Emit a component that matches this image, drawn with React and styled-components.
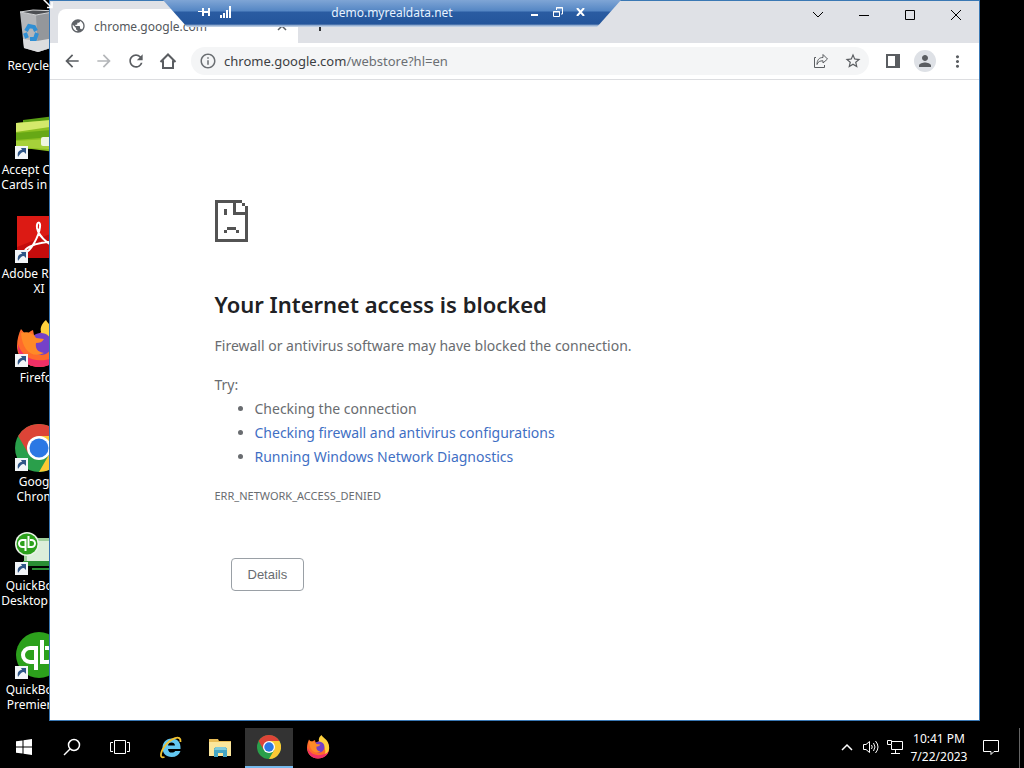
import React from "react";
import styled, { createGlobalStyle } from "styled-components";
import {
  MdArrowBack,
  MdArrowForward,
  MdRefresh,
  MdInfoOutline,
  MdStarBorder,
  MdPerson,
  MdMoreVert,
  MdPublic
} from "react-icons/md";

const GlobalStyle = createGlobalStyle`
  * {
    box-sizing: border-box;
  }
  body {
    margin: 0;
    background: #000;
    font-family: "Noto Sans", "Open Sans", sans-serif;
  }
  button {
    padding: 0;
    border: 0;
    background: none;
    color: inherit;
    font: inherit;
  }
`;

const Screen = styled.div`
  display: flex;
  flex-direction: column;
  height: 100vh;
  overflow: hidden;
`;

const Desktop = styled.main`
  position: relative;
  flex: 1;
  min-height: 0;
`;

/* desktop shortcuts */

const Shortcuts = styled.div`
  display: flex;
  flex-direction: column;
  width: 78px;
`;

const Shortcut = styled.button`
  display: flex;
  flex-direction: column;
  align-items: center;
  gap: 2px;
  height: 104px;
  padding-top: 8px;
  color: #fff;
  font-size: 12px;
  line-height: 15px;
  white-space: nowrap;
`;

const Picture = styled.svg`
  display: block;
  flex: none;
  width: ${props => props.$size || 48}px;
  height: ${props => props.$size || 48}px;
`;

const Cursor = styled.svg`
  position: absolute;
  top: 0;
  left: 43px;
`;

/* browser window */

const Window = styled.section`
  position: absolute;
  top: 0;
  right: 44px;
  bottom: 7px;
  left: 49px;
  display: flex;
  flex-direction: column;
  border: 1px solid #3a78b4;
  background: #fff;
`;

const TabStrip = styled.div`
  display: flex;
  height: 42px;
  padding: 8px 0 0 8px;
  background: #dfe1e6;
`;

const Tab = styled.div`
  display: flex;
  align-items: center;
  gap: 8px;
  width: 240px;
  padding: 0 9px 0 12px;
  border-radius: 8px 8px 0 0;
  background: #fff;
  color: #54585c;
  font-size: 12px;
`;

const TabTitle = styled.span`
  flex: 1;
`;

const IconButton = styled.button`
  display: flex;
  align-items: center;
  justify-content: center;
  width: ${props => props.$width || 32}px;
  height: ${props => props.$height || 32}px;
  color: ${props => props.$color || "#5a5d61"};
`;

const Captions = styled.div`
  display: flex;
  margin: -8px 0 0 auto;
`;

const Toolbar = styled.div`
  display: flex;
  align-items: center;
  height: 37px;
  padding: 0 6px;
  border-bottom: 1px solid #dcdde0;
`;

const AddressBar = styled.div`
  display: flex;
  flex: 1;
  align-items: center;
  height: 28px;
  margin: 0 8px 0 7px;
  padding-left: 8px;
  border-radius: 14px;
  background: #f4f5f6;
  color: #6b6f73;
`;

const Address = styled.div`
  flex: 1;
  margin-left: 7px;
  font-size: 13px;
  b {
    color: #3c4043;
    font-weight: 400;
  }
`;

const Avatar = styled.span`
  display: flex;
  align-items: center;
  justify-content: center;
  width: 22px;
  height: 22px;
  border-radius: 50%;
  background: #dee1e6;
`;

/* error page */

const ErrorPage = styled.article`
  width: 100%;
  max-width: 600px;
  margin: 0 auto;
  padding-top: 120px;
  color: #696c70;
  font-size: 14px;
  line-height: 24px;
`;

const Title = styled.h1`
  margin: 40px 0 15px;
  color: #202124;
  font-size: 22px;
  font-weight: 600;
  line-height: 30px;
`;

const Paragraph = styled.p`
  margin: 15px 0 0;
`;

const Suggestions = styled.ul`
  margin: 0;
  padding-left: 40px;
`;

const Link = styled.a`
  color: #3f6fc4;
  text-decoration: none;
`;

const ErrorCode = styled.p`
  margin: 15px 0 50px;
  font-size: 11px;
`;

const DetailsButton = styled.button`
  height: 33px;
  margin-left: 16px;
  padding: 0 16px;
  border: 1px solid #9aa0a6;
  border-radius: 4px;
  font-family: "Liberation Sans", Arial, sans-serif;
  font-size: 13px;
`;

/* remote connection bar, floats over the window */

const ConnectionBar = styled.header`
  position: absolute;
  top: 0;
  left: 163px;
  display: flex;
  align-items: center;
  width: 458px;
  height: 27px;
  padding: 0 29px 3px 30px;
  background: linear-gradient(#7fa5d5, #5486c4 11px, #2a5ca2 12px, #24559b 24px, #b9cbe2 26px);
  clip-path: polygon(0 0, 100% 0, 434px 100%, 24px 100%);
  color: #e6f2ff;
  font-size: 12px;
`;

const HostName = styled.span`
  flex: 1;
  padding-left: 24px;
  text-align: center;
`;

/* taskbar */

const Taskbar = styled.footer`
  display: flex;
  height: 40px;
  background: #000;
  color: #fff;
`;

const TaskButton = styled.button`
  display: flex;
  align-items: center;
  justify-content: center;
  width: ${props => props.$width || 48}px;
  height: 40px;
  border-bottom: 2px solid ${props => (props.$active ? "#76b9ed" : "transparent")};
  background: ${props => (props.$active ? "#333" : "transparent")};
`;

const Pinned = styled.div`
  display: flex;
  gap: 1px;
  margin-left: 3px;
`;

const Tray = styled.div`
  display: flex;
  align-items: center;
  margin-left: auto;
`;

const Clock = styled.time`
  width: 64px;
  font-size: 12px;
  line-height: 18px;
  text-align: center;
`;

const ShowDesktop = styled.button`
  width: 5px;
  height: 40px;
  margin-left: 8px;
  border-left: 1px solid #666;
`;

const ShortcutArrow = () => (
  <g>
    <path d="M0 34h13v13H0z" fill="#f2f5f8" />
    <path d="M3 45c-1-5 1-7 4-7l-1-2h5v6l-2-2c-3 0-4 2-6 5z" fill="#2f5687" />
  </g>
);

const RecycleBin = () => (
  <Picture viewBox="0 0 48 48">
    <path d="m5 4 16 3 22-4-4 36-16 5-14-4z" fill="#b4b6b9" />
    <path d="m21 7 22-4-4 36-16 5z" fill="#94979b" />
    <path d="m5 4 13-2 25 1-22 4z" fill="#4b4e52" stroke="#d3d5d7" />
    <path d="m8 31 14 2 17-3-1 9-15 5-14-4z" fill="#dcdddf" />
    <g fill="none" stroke="#2f8fd4" strokeWidth="4">
      <path d="m11 23 3-5 5 1 2 4M22 25l-2 6h-5M10 25l2 5" />
    </g>
  </Picture>
);

const CreditCards = () => (
  <Picture viewBox="0 0 48 48">
    <path d="m8 8 40-5v34H8z" fill="#599d14" />
    <path d="m1 11 47-4v34L1 35z" fill="#8cc022" />
    <path d="m1 11 47-4v6L1 20z" fill="#d4e96b" />
    <path d="m1 21 47-4v7L1 28z" fill="#67a815" />
    <path d="m1 29 47-3v12L1 35z" fill="#a6d13a" />
    <rect x="26" y="25" width="24" height="9" rx="2" fill="#eef6df" />
    <ShortcutArrow />
  </Picture>
);

const Acrobat = () => (
  <Picture viewBox="0 0 48 48">
    <path d="M2 0h46v42H2z" fill="#c40c0c" />
    <path d="M2 0h46v13L2 31z" fill="#dc1a14" />
    <path
      d="M10 36c-2-3 9-8 16-9 9-2 16-1 15 2-2 4-17-7-19-17-1-7 4-7 3-1-1 9-10 26-15 25z"
      fill="none"
      stroke="#fff"
      strokeWidth="2"
    />
    <ShortcutArrow />
  </Picture>
);

const FirefoxShapes = () => (
  <>
    <path
      d="M6 9l5 6c2-2 4-4 7-5l1 5c6 0 10-5 9-9 12 2 19 10 18 22-1 11-10 19-22 19S2 38 2 26C2 19 4 13 6 9z"
      fill="#ff6b2b"
    />
    <path d="M31 0c2 5 12 9 14 18 3 10 1 17-7 23 2-11 0-19-10-26-5-5-1-12 3-15z" fill="#ffd13d" />
    <path d="M3 24c4 14 18 20 35 14 5-2 7-5 8-9-1 11-10 18-22 18S2 38 3 24z" fill="#f02f66" />
    <circle cx="26" cy="24" r="11" fill="#7541c8" />
    <path d="M6 13c7-2 13 1 15 5l8 1c-2 3-4 4-8 4-1 6 2 9 8 10-12 6-22-3-23-20z" fill="#ff8a27" />
  </>
);

const Firefox = () => (
  <Picture viewBox="0 0 48 48">
    <FirefoxShapes />
    <ShortcutArrow />
  </Picture>
);

const ChromeShapes = () => (
  <>
    <circle cx="24" cy="24" r="24" fill="#2a9f4b" />
    <path d="M3.200 12A24 24 0 0 1 44.800 12H24L13.600 30z" fill="#dc4437" />
    <path d="M44.800 12A24 24 0 0 1 24 48l10.400-18L24 12z" fill="#fcc934" />
    <circle cx="24" cy="24" r="12" fill="#fff" />
    <circle cx="24" cy="24" r="9.500" fill="#2b78e4" />
  </>
);

const Chrome = () => (
  <Picture viewBox="0 0 48 48">
    <ChromeShapes />
    <ShortcutArrow />
  </Picture>
);

/* two bowls back to back, one stem down and one stem up */
const QbMark = () => (
  <g fill="none" stroke="#fff" strokeWidth="4">
    <path d="M21 30h-6a7 7 0 0 1 0-14h6v22" />
    <path d="M27 8v22h6a7 7 0 0 0 0-14h-3" />
  </g>
);

const QuickBooksDesktop = () => (
  <Picture viewBox="0 0 48 48">
    <path d="M9 10h39v26H9z" fill="#9fcf9b" />
    <path d="M12 13h36v20H12z" fill="#dceeda" />
    <path d="M8 33h40v5H8zM17 40h25v2H17z" fill="#2a8d34" />
    <circle cx="12" cy="16" r="12" fill="#e9f3e6" />
    <circle cx="12" cy="16" r="10.500" fill="#2ca01c" />
    <g transform="translate(0 4) scale(.5)">
      <QbMark />
    </g>
    <ShortcutArrow />
  </Picture>
);

const QuickBooks = () => (
  <Picture viewBox="0 0 48 48">
    <circle cx="24" cy="23" r="23" fill="#2ca01c" />
    <QbMark />
    <ShortcutArrow />
  </Picture>
);

const shortcuts = [
  { icon: RecycleBin, lines: ["Recycle Bin"] },
  { icon: CreditCards, lines: ["Accept Credit", "Cards in Qu..."] },
  { icon: Acrobat, lines: ["Adobe Reade", "XI"] },
  { icon: Firefox, lines: ["Firefox"] },
  { icon: Chrome, lines: ["Google", "Chrome"] },
  { icon: QuickBooksDesktop, lines: ["QuickBooks", "Desktop Pro.."] },
  { icon: QuickBooks, lines: ["QuickBooks", "Premier - ..."] }
];

const InternetExplorer = () => (
  <Picture viewBox="0 0 24 24" $size={24}>
    <path
      d="M21.500 16c-1.500 4-4.500 6-8.800 6C7 22 3.500 18.200 3.500 13S7 3.500 12.500 3.500c6 0 9.500 4 9 10.500H9c.2 2.500 1.600 3.600 3.800 3.600 1.600 0 2.700-.4 3.400-1.600zM9 10.600h7c-.2-2-1.400-3-3.400-3s-3.400 1-3.600 3z"
      fill="#63c8f2"
      fillRule="evenodd"
    />
    <path
      d="M21.500 7c1-8-10-4-16 4.500C1 18 .5 24 5.500 22"
      fill="none"
      stroke="#f2c230"
      strokeWidth="1.800"
    />
  </Picture>
);

const Folder = () => (
  <Picture viewBox="0 0 24 24" $size={24}>
    <path d="M1 4h9l1 2h12v15H1z" fill="#e9bd57" />
    <path d="M1 7h22v14H1z" fill="#fbe69c" />
    <path d="M6 13.500 8 12h9l2 1.500V22h-4v-4h-5v4H6z" fill="#45a6c4" />
    <path d="M8 12h9l2 3H6z" fill="#7fcbdc" />
  </Picture>
);

const SadPage = () => (
  <svg width="33" height="42" viewBox="0 0 11 14" fill="#535353" shapeRendering="crispEdges">
    <path d="M0 0h9v1H1v12h9V5H6V1h1v3h3V2h1v12H0zM9 1h1v1H9zM3 3h1v2H3zM3 10h1v1H3zM4 9h3v1H4zM7 10h1v1H7z" />
  </svg>
);

const BrowserWindow = () => (
  <Window aria-label="Google Chrome">
    <TabStrip>
      <Tab>
        <MdPublic size={16} color="#5f6368" />
        <TabTitle>chrome.google.com</TabTitle>
        <IconButton $width={14} $height={16} aria-label="Close tab">
          <svg width="10" height="10" stroke="currentColor" strokeWidth="1.500">
            <path d="m1 1 8 8M9 1 1 9" />
          </svg>
        </IconButton>
      </Tab>
      <IconButton $width={43} aria-label="New tab" $color="#303236">
        <svg width="12" height="12" stroke="currentColor" strokeWidth="2">
          <path d="M6 0v12M0 6h12" />
        </svg>
      </IconButton>
      <Captions>
        <IconButton $width={46} $height={28} $color="#000" aria-label="Search tabs">
          <svg width="12" height="8" fill="none" stroke="currentColor">
            <path d="m1 1 5 5 5-5" />
          </svg>
        </IconButton>
        <IconButton $width={46} $height={28} $color="#000" aria-label="Minimize">
          <svg width="10" height="10" fill="none" stroke="currentColor">
            <path d="M0 5.500h10" />
          </svg>
        </IconButton>
        <IconButton $width={46} $height={28} $color="#000" aria-label="Maximize">
          <svg width="10" height="10" fill="none" stroke="currentColor">
            <path d="M.5.500h9v9h-9z" />
          </svg>
        </IconButton>
        <IconButton $width={46} $height={28} $color="#000" aria-label="Close">
          <svg width="10" height="10" fill="none" stroke="currentColor">
            <path d="m0 0 10 10M10 0 0 10" />
          </svg>
        </IconButton>
      </Captions>
    </TabStrip>
    <Toolbar>
      <IconButton aria-label="Back">
        <MdArrowBack size={20} />
      </IconButton>
      <IconButton aria-label="Forward" $color="#b4b6b9">
        <MdArrowForward size={20} />
      </IconButton>
      <IconButton aria-label="Reload">
        <MdRefresh size={20} />
      </IconButton>
      <IconButton aria-label="Home">
        <svg width="18" height="18" fill="none" stroke="currentColor" strokeWidth="2">
          <path d="M1.500 10 9 2.500l7.500 7.500M4 8.500V16h10V8.500" />
        </svg>
      </IconButton>
      <AddressBar>
        <MdInfoOutline size={18} />
        <Address>
          <b>chrome.google.com</b>/webstore?hl=en
        </Address>
        <IconButton aria-label="Share this page">
          <svg width="16" height="16" fill="none" stroke="currentColor">
            <path d="M3 4.500H1.500v10h10V12" />
            <path d="M10 1.500 14.500 6 10 10V7.800C7 7.800 5 8.500 4 11.500c0-4.500 2-7 6-7z" />
          </svg>
        </IconButton>
        <IconButton aria-label="Bookmark this tab">
          <MdStarBorder size={18} />
        </IconButton>
      </AddressBar>
      <IconButton aria-label="Side panel">
        <svg width="14" height="14" fill="currentColor" fillRule="evenodd">
          <path d="M0 0h14v14H0zM2 2v10h7V2z" />
        </svg>
      </IconButton>
      <IconButton aria-label="Profile">
        <Avatar>
          <MdPerson size={18} />
        </Avatar>
      </IconButton>
      <IconButton aria-label="Menu">
        <MdMoreVert size={19} />
      </IconButton>
    </Toolbar>
    <ErrorPage>
      <SadPage />
      <Title>Your Internet access is blocked</Title>
      <Paragraph>Firewall or antivirus software may have blocked the connection.</Paragraph>
      <Paragraph>Try:</Paragraph>
      <Suggestions>
        <li>Checking the connection</li>
        <li>
          <Link href="#firewall">Checking firewall and antivirus configurations</Link>
        </li>
        <li>
          <Link href="#diagnostics">Running Windows Network Diagnostics</Link>
        </li>
      </Suggestions>
      <ErrorCode>ERR_NETWORK_ACCESS_DENIED</ErrorCode>
      <DetailsButton>Details</DetailsButton>
    </ErrorPage>
  </Window>
);

const RemoteBar = () => (
  <ConnectionBar>
    <IconButton $width={22} $height={24} $color="#fff" aria-label="Pin the connection bar">
      <svg width="12" height="10" fill="currentColor">
        <path d="M0 4h4V1h2v3h4V1h2v8h-2V6H6v3H4V5H0z" />
      </svg>
    </IconButton>
    <IconButton $width={22} $height={24} $color="#fff" aria-label="Connection quality">
      <svg width="12" height="12" fill="currentColor">
        <path d="M0 9h2v3H0zM3 7h2v5H3zM6 4h2v8H6zM9 0h2v12H9z" />
      </svg>
    </IconButton>
    <HostName>demo.myrealdata.net</HostName>
    <IconButton $width={23} $height={24} $color="#fff" aria-label="Minimize session">
      <svg width="7" height="10" fill="currentColor">
        <path d="M0 7h7v2H0z" />
      </svg>
    </IconButton>
    <IconButton $width={23} $height={24} $color="#fff" aria-label="Restore session">
      <svg width="10" height="10" fill="none" stroke="currentColor">
        <path d="M.5 4.500h6v5h-6zM0 5h7M3.500 3V.5h6V7H8M3 1h7" />
      </svg>
    </IconButton>
    <IconButton $width={23} $height={24} $color="#fff" aria-label="Close session">
      <svg width="9" height="8" stroke="currentColor" strokeWidth="2">
        <path d="m1 0 7 8M8 0 1 8" />
      </svg>
    </IconButton>
  </ConnectionBar>
);

const WindowsTaskbar = () => (
  <Taskbar>
    <TaskButton aria-label="Start">
      <svg width="16" height="16" fill="#fff">
        <path d="M0 2.300 6.500 1.400v6.100H0zM7.500 1.200 16 0v7.500H7.500zM0 8.500h6.500v6.100L0 13.700zM7.500 8.500H16V16l-8.500-1.200z" />
      </svg>
    </TaskButton>
    <TaskButton aria-label="Search">
      <svg width="18" height="18" fill="none" stroke="#fff" strokeWidth="1.500">
        <circle cx="11" cy="7" r="5.500" />
        <path d="m7 11-6 6" />
      </svg>
    </TaskButton>
    <TaskButton aria-label="Task View">
      <svg width="20" height="14" fill="none" stroke="#fff">
        <path d="M4.500.5h11v13h-11zM3 2.500H.5v9H3M17 2.500h2.500v9H17" />
      </svg>
    </TaskButton>
    <Pinned>
      <TaskButton aria-label="Internet Explorer">
        <InternetExplorer />
      </TaskButton>
      <TaskButton aria-label="File Explorer">
        <Folder />
      </TaskButton>
      <TaskButton $active aria-label="Google Chrome">
        <Picture viewBox="0 0 48 48" $size={24}>
          <ChromeShapes />
        </Picture>
      </TaskButton>
      <TaskButton aria-label="Firefox">
        <Picture viewBox="0 0 48 48" $size={24}>
          <FirefoxShapes />
        </Picture>
      </TaskButton>
    </Pinned>
    <Tray>
      <TaskButton $width={24} aria-label="Show hidden icons">
        <svg width="12" height="8" fill="none" stroke="#fff" strokeWidth="1.500">
          <path d="m1 7 5-5 5 5" />
        </svg>
      </TaskButton>
      <TaskButton $width={24} aria-label="Volume">
        <svg width="17" height="14" fill="none" stroke="#fff">
          <path d="M.5 4.500H3L6.500 1.500v11L3 9.500H.5zM8.500 5q1.500 2 0 4M10.500 3q3 4 0 8M12.500 1q5 6 0 12" />
        </svg>
      </TaskButton>
      <TaskButton $width={24} aria-label="Network">
        <svg width="16" height="14" fill="none" stroke="#fff">
          <path d="M5 1.500h10.500v8H4.500V5M.5.5h4v4h-4zM8.500 9.500v4M4 13.500h9" />
        </svg>
      </TaskButton>
      <Clock>
        10:41 PM
        <br />
        7/22/2023
      </Clock>
      <TaskButton $width={40} aria-label="Notifications">
        <svg width="16" height="16" fill="none" stroke="#fff">
          <path d="M.5 1.500h15v11H11l-3 3v-3H.5z" />
        </svg>
      </TaskButton>
      <ShowDesktop aria-label="Show desktop" />
    </Tray>
  </Taskbar>
);

const App = () => (
  <Screen>
    <GlobalStyle />
    <Desktop>
      <Shortcuts>
        {shortcuts.map(({ icon: Icon, lines }, index) => (
          <Shortcut key={index}>
            <Icon />
            <span>
              {lines[0]}
              <br />
              {lines[1]}
            </span>
          </Shortcut>
        ))}
      </Shortcuts>
      <BrowserWindow />
      <RemoteBar />
      <Cursor width="11" height="9" fill="none" stroke="#fff" strokeWidth="1.500">
        <path d="m0-1 8 8M9 2v5.500H4" />
      </Cursor>
    </Desktop>
    <WindowsTaskbar />
  </Screen>
);

export default App;
